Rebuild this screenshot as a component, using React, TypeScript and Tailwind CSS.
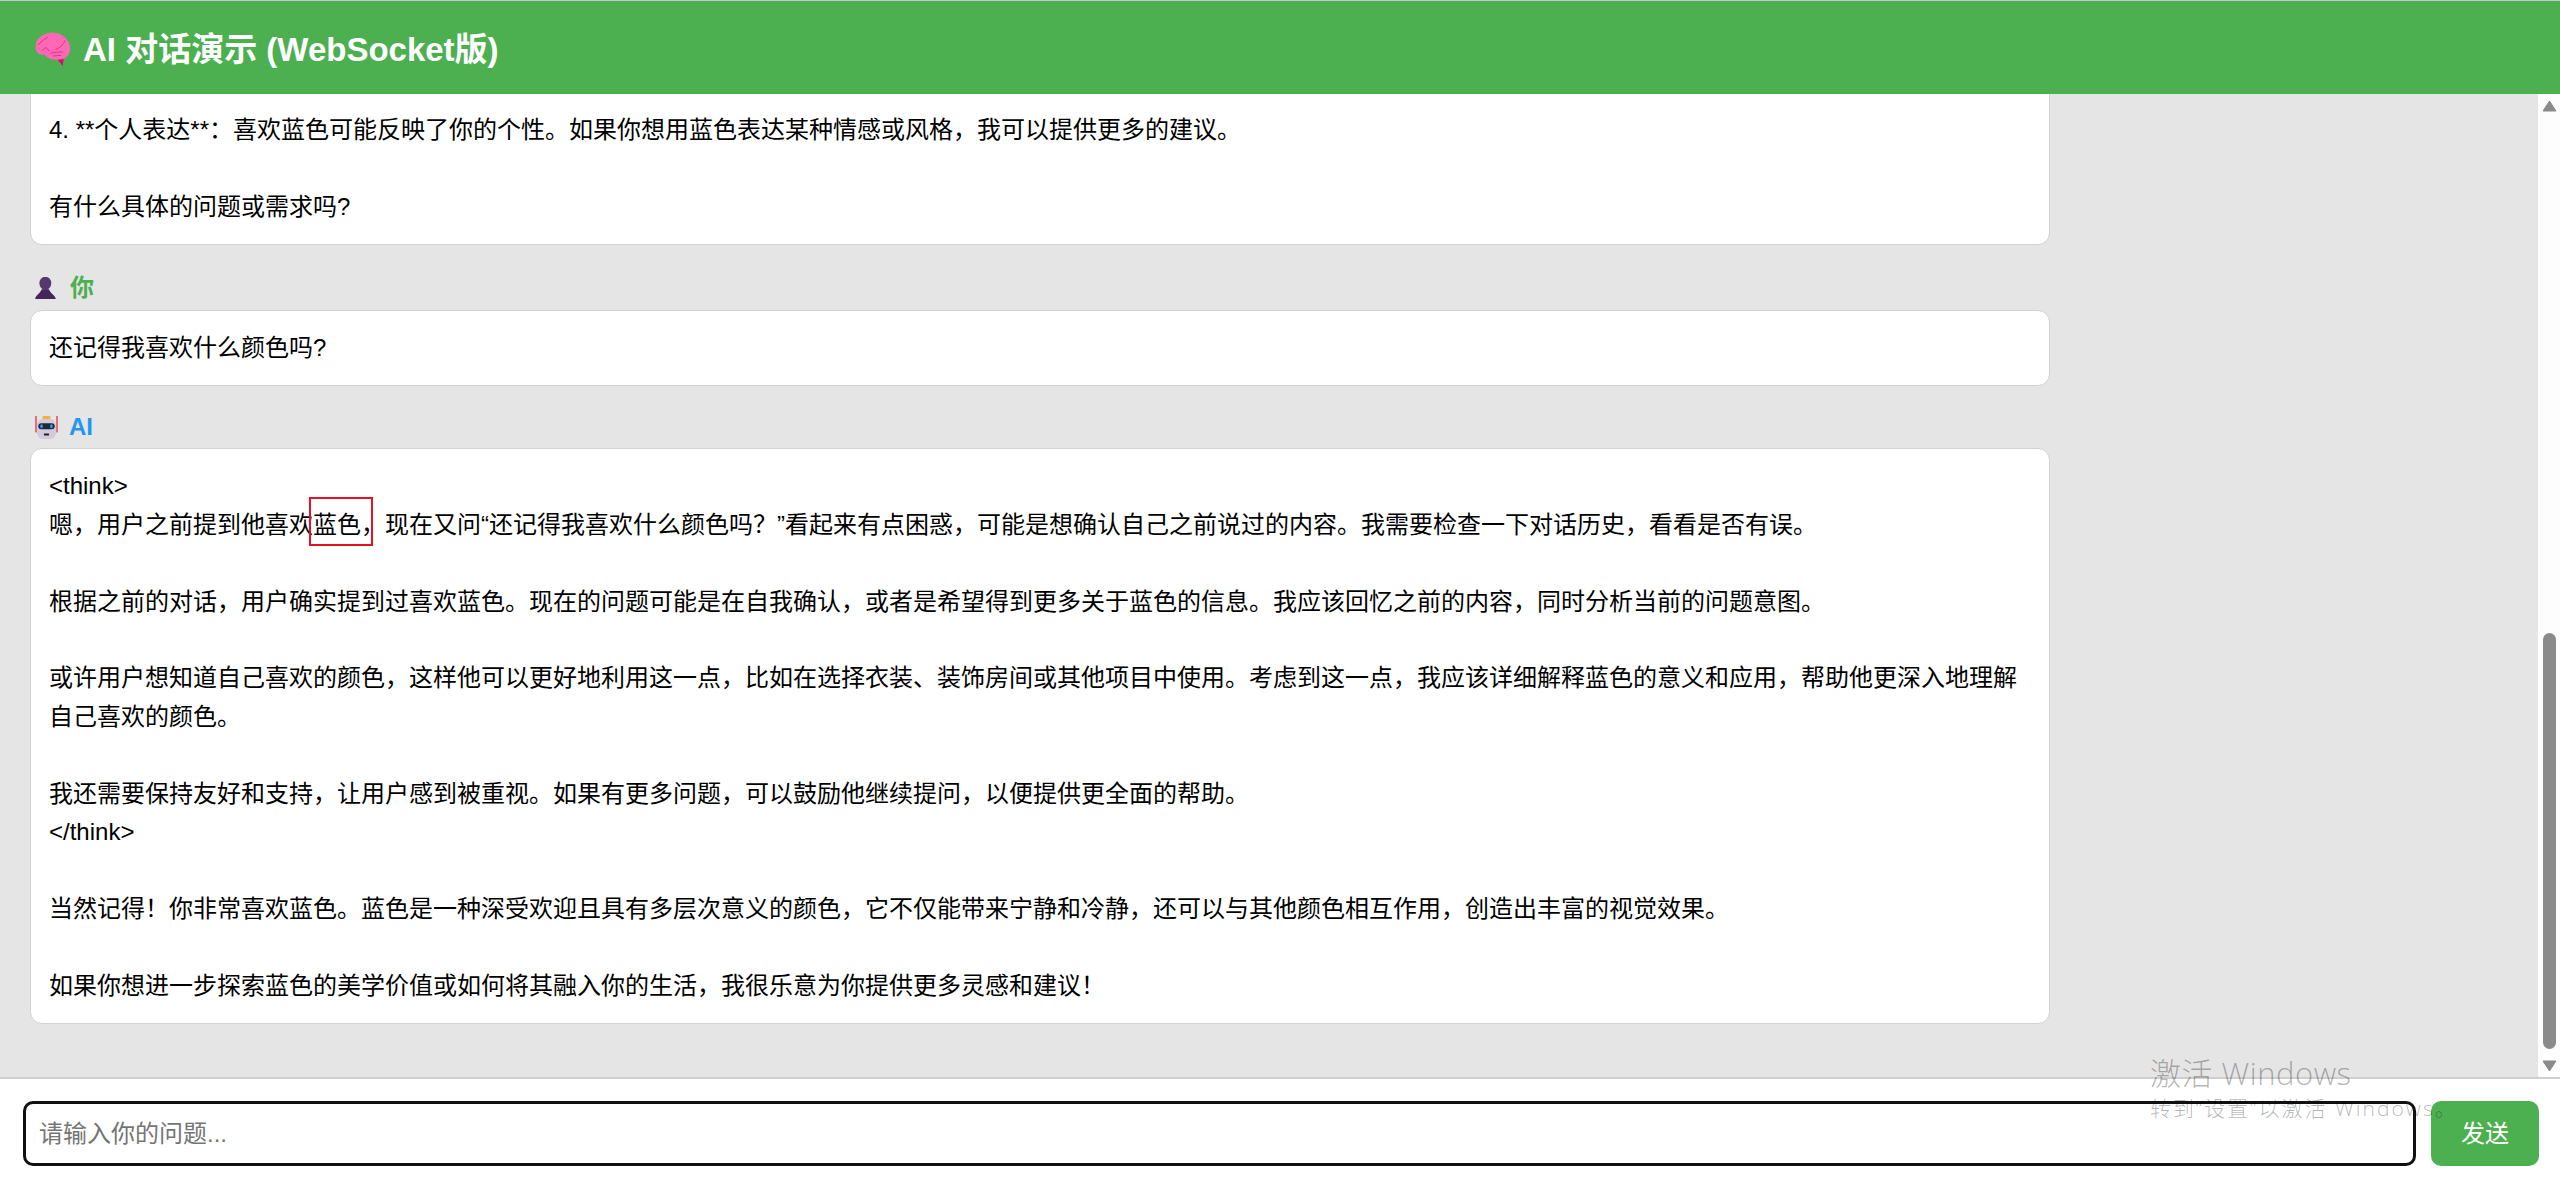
const FONT = "[font-family:'Liberation_Sans','Noto_Sans_CJK_SC',sans-serif]";

function BrainIcon() {
  return (
    <svg viewBox="45 40 105 105" className="w-[35px] h-[35px] shrink-0">
      <path d="M112 122 L131 120 L128 142 Z" fill="#e6007e" />
      <path d="M47 90 C44 68 60 46 90 42 C122 39 149 60 150 88 C151 106 140 118 125 122 C105 126 85 122 75 109 C60 109 49 102 47 90 Z" fill="#ff69b4" />
      <g fill="none" stroke="#e0218a" strokeWidth="2.5" strokeLinecap="round">
        <path d="M55 78 C62 70 72 62 82 57" />
        <path d="M68 94 C74 85 82 85 86 96" />
        <path d="M108 92 C120 88 130 78 135 66" />
        <path d="M92 104 C105 100 115 100 128 100" />
        <path d="M100 112 L122 110" />
      </g>
    </svg>
  );
}

function PersonIcon() {
  return (
    <svg viewBox="45 33 63 67" className="w-[21px] h-[22px] shrink-0">
      <ellipse cx="76" cy="52" rx="18" ry="20" fill="#55386e" />
      <path d="M45 100 C47 86 60 84 65 70 L87 70 C92 84 105 86 108 100 Z" fill="#44275a" />
    </svg>
  );
}

function RobotIcon() {
  return (
    <svg viewBox="15 15 70 70" className="w-[23px] h-[23px] shrink-0">
      <rect x="16" y="15" width="4" height="50" fill="#e8323c" />
      <rect x="80" y="15" width="4" height="50" fill="#e8323c" />
      <rect x="38" y="15" width="24" height="10" rx="2" fill="#f6b13c" />
      <rect x="21" y="24" width="58" height="61" rx="18" fill="#d2cbdc" />
      <rect x="25" y="37" width="50" height="18" rx="9" fill="#1e2a38" />
      <ellipse cx="35" cy="46" rx="4" ry="6" fill="#2aa3ee" />
      <ellipse cx="65" cy="46" rx="4" ry="6" fill="#2aa3ee" />
      <rect x="42" y="68" width="16" height="6" rx="2" fill="#222" />
    </svg>
  );
}

function ScrollArrow({ down }: { down?: boolean }) {
  return (
    <svg viewBox="0 0 15 12" className="w-[15px] h-[12px] shrink-0">
      <path d={down ? "M1 1 H14 L7.5 11 Z" : "M1 11 H14 L7.5 1 Z"} fill="#8a8a8a" stroke="#8a8a8a" strokeLinejoin="round" />
    </svg>
  );
}

function Card({ children }: { children: React.ReactNode }) {
  return (
    <div className="w-[2020px] bg-white rounded-[12px] border border-[#d2d2d2] px-[18px] py-[18px] text-[24px] leading-[38.4px] text-black whitespace-pre-wrap shrink-0">
      {children}
    </div>
  );
}

export default function App() {
  return (
    <div className={`relative h-screen flex flex-col overflow-hidden bg-white ${FONT}`}>
      <header className="h-[94px] shrink-0 bg-[#4caf50] border-t border-[#c8c8c8] flex items-center gap-[13px] px-[35px] pt-[4px] text-white text-[33px] font-bold">
        <BrainIcon />
        <span>AI 对话演示 (WebSocket版)</span>
      </header>

      <div className="flex-1 min-h-0 flex">
        <main className="flex-1 min-w-0 bg-[#e5e5e5] flex flex-col justify-end overflow-hidden pl-[30px] pb-[53px]">
          <Card>
            {"\n4. **个人表达**：喜欢蓝色可能反映了你的个性。如果你想用蓝色表达某种情感或风格，我可以提供更多的建议。\n\n有什么具体的问题或需求吗?"}
          </Card>

          <div className="flex items-center gap-[14px] mt-[24px] mb-[3px] h-[38px] text-[24px] font-bold text-[#4caf50] shrink-0 pl-[5px]">
            <PersonIcon />
            <span>你</span>
          </div>
          <Card>还记得我喜欢什么颜色吗?</Card>

          <div className="flex items-center gap-[11px] mt-[22px] mb-[2px] h-[38px] text-[24px] font-bold text-[#2196f3] shrink-0 pl-[5px]">
            <RobotIcon />
            <span>AI</span>
          </div>
          <Card>
            {"<think>\n嗯，用户之前提到他喜欢"}
            <span className="relative">
              蓝色
              <span className="absolute left-[-4px] top-[-14px] w-[64px] h-[49px] border-2 border-[#e81123]" />
            </span>
            {"，现在又问“还记得我喜欢什么颜色吗？”看起来有点困惑，可能是想确认自己之前说过的内容。我需要检查一下对话历史，看看是否有误。\n\n根据之前的对话，用户确实提到过喜欢蓝色。现在的问题可能是在自我确认，或者是希望得到更多关于蓝色的信息。我应该回忆之前的内容，同时分析当前的问题意图。\n\n或许用户想知道自己喜欢的颜色，这样他可以更好地利用这一点，比如在选择衣装、装饰房间或其他项目中使用。考虑到这一点，我应该详细解释蓝色的意义和应用，帮助他更深入地理解自己喜欢的颜色。\n\n我还需要保持友好和支持，让用户感到被重视。如果有更多问题，可以鼓励他继续提问，以便提供更全面的帮助。\n</think>\n\n当然记得！你非常喜欢蓝色。蓝色是一种深受欢迎且具有多层次意义的颜色，它不仅能带来宁静和冷静，还可以与其他颜色相互作用，创造出丰富的视觉效果。\n\n如果你想进一步探索蓝色的美学价值或如何将其融入你的生活，我很乐意为你提供更多灵感和建议！"}
          </Card>
        </main>

        <div className="w-[22px] shrink-0 bg-[#fdfdfd] flex flex-col items-center pt-[6px] pb-[5px] pl-[1px]">
          <ScrollArrow />
          <div className="flex-1" />
          <div className="w-[13px] h-[416px] rounded-full bg-[#8a8a8a] mb-[11px]" />
          <ScrollArrow down />
        </div>
      </div>

      <footer className="h-[110px] shrink-0 border-t-2 border-[#cfcfcf] flex items-start gap-[15px] pt-[22px] pl-[23px] pr-[21px]">
        <input
          placeholder="请输入你的问题..."
          className="flex-1 min-w-0 h-[65px] px-[13px] rounded-[10px] border-[3px] border-[#111] bg-white text-[24px] placeholder:text-[#757575] outline-none"
        />
        <button className="w-[108px] h-[65px] shrink-0 rounded-[10px] bg-[#4caf50] text-white text-[24px]">发送</button>
      </footer>

      {/* windows activation watermark */}
      <div className="absolute left-[2150px] top-[1052px] text-black/30 pointer-events-none whitespace-nowrap [font-family:'Open_Sans','Noto_Sans_CJK_SC',sans-serif]">
        <div className="text-[31px] leading-[42px] font-light tracking-[0.5px]">激活 Windows</div>
        <div className="text-[21px] leading-[28px] font-light tracking-[2px]">转到“设置”以激活 Windows。</div>
      </div>
    </div>
  );
}
